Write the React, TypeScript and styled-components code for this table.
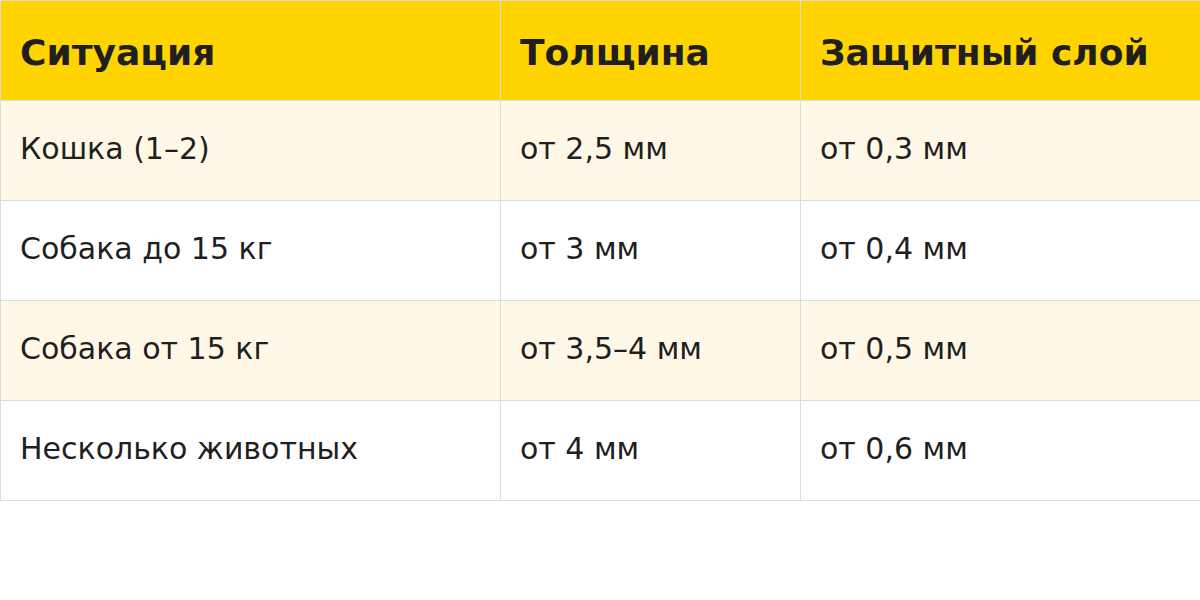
import React from "react";
import styled, { createGlobalStyle } from "styled-components";

interface Row {
  situation: string;
  thickness: string;
  layer: string;
}

const rows: Row[] = [
  { situation: "Кошка (1–2)", thickness: "от 2,5 мм", layer: "от 0,3 мм" },
  { situation: "Собака до 15 кг", thickness: "от 3 мм", layer: "от 0,4 мм" },
  { situation: "Собака от 15 кг", thickness: "от 3,5–4 мм", layer: "от 0,5 мм" },
  { situation: "Несколько животных", thickness: "от 4 мм", layer: "от 0,6 мм" },
];

export default function App() {
  return (
    <>
      <GlobalStyle />
      <Table>
        <colgroup>
          <col style={{ width: 500 }} />
          <col style={{ width: 300 }} />
          <col style={{ width: 400 }} />
        </colgroup>
        <thead>
          <tr>
            <TableHeader>Ситуация</TableHeader>
            <TableHeader>Толщина</TableHeader>
            <TableHeader>Защитный слой</TableHeader>
          </tr>
        </thead>
        <tbody>
          {rows.map((r, i) => (
            <TableRow key={i} $striped={i % 2 === 0}>
              <TableData>{r.situation}</TableData>
              <TableData>{r.thickness}</TableData>
              <TableData>{r.layer}</TableData>
            </TableRow>
          ))}
        </tbody>
      </Table>
    </>
  );
}

const GlobalStyle = createGlobalStyle`
  body {
    margin: 0;
    background: #fff;
    font-family: "DejaVu Sans", sans-serif;
    color: #1f1f1f;
  }
`;

const Table = styled.table`
  width: 1201px;
  table-layout: fixed;
  border-collapse: collapse;
`;

const TableHeader = styled.th`
  height: 100px;
  box-sizing: border-box;
  padding: 4px 19px 0;
  text-align: left;
  background-color: #ffd400;
  border: 1px solid #dcdcdc;
  font-size: 36px;
  font-weight: bold;
  line-height: 1.2;
  color: #1f1f1f;
`;

const TableRow = styled.tr<{ $striped: boolean }>`
  background-color: ${(p) => (p.$striped ? "#fff8e6" : "#ffffff")};
`;

const TableData = styled.td`
  height: 100px;
  box-sizing: border-box;
  padding: 0 19px 4px;
  border: 1px solid #dcdcdc;
  font-size: 30px;
  line-height: 1.2;
  color: #1f1f1f;
`;
